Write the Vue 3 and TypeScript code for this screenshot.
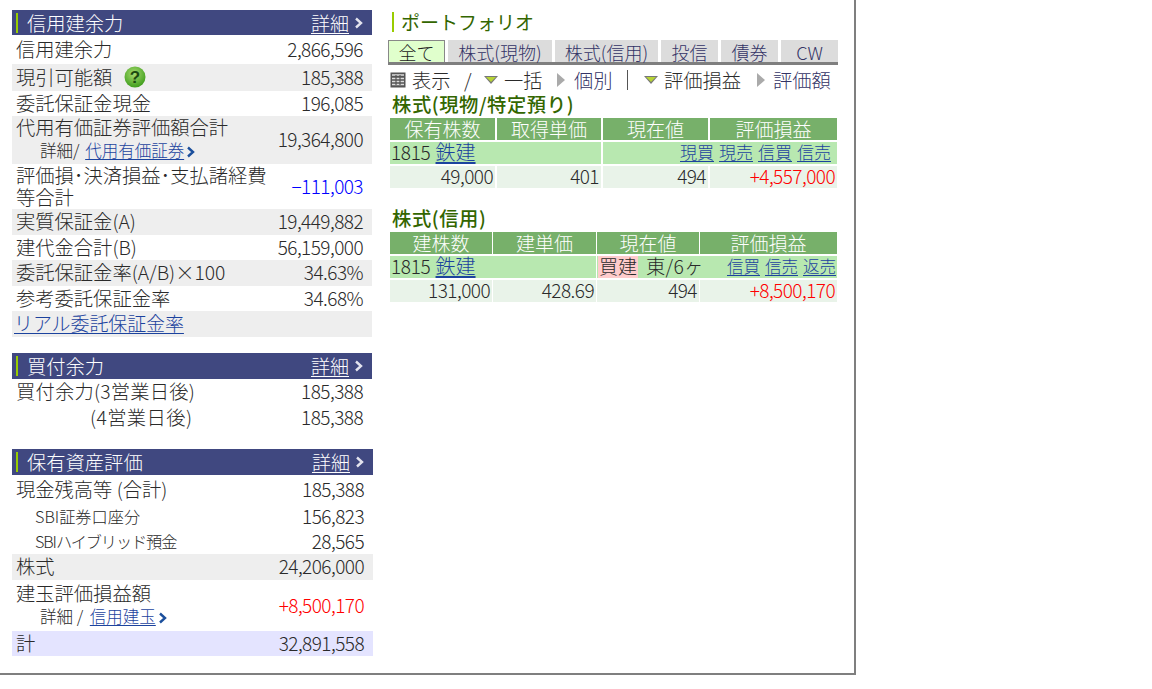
<script setup lang="ts">
interface Row {
  label: string
  value?: string
  h: number
  gray?: boolean
  cls?: string
}
const sec1a: Row[] = [
  { label: '信用建余力', value: '2,866,596', h: 29 },
  { label: '現引可能額', value: '185,388', h: 27, gray: true, cls: 'help' },
  { label: '委託保証金現金', value: '196,085', h: 25 },
]
const sec1b: Row[] = [
  { label: '実質保証金(A)', value: '19,449,882', h: 26, gray: true },
  { label: '建代金合計(B)', value: '56,159,000', h: 25 },
  { label: '委託保証金率(A/B)×100', value: '34.63%', h: 26, gray: true },
  { label: '参考委託保証金率', value: '34.68%', h: 25 },
]
const sec2: Row[] = [
  { label: '買付余力(3営業日後)', value: '185,388', h: 26, cls: 'loose' },
  { label: '(4営業日後)', value: '185,388', h: 26, cls: 'indent' },
]
const sec3a: Row[] = [
  { label: '現金残高等 (合計)', value: '185,388', h: 29 },
  { label: 'SBI証券口座分', value: '156,823', h: 25, cls: 'sub' },
  { label: 'SBIハイブリッド預金', value: '28,565', h: 25, cls: 'sub tight' },
  { label: '株式', value: '24,206,000', h: 26, gray: true },
]
const tabs = [
  { t: '全て', w: 57, on: true },
  { t: '株式(現物)', w: 104 },
  { t: '株式(信用)', w: 103 },
  { t: '投信', w: 57 },
  { t: '債券', w: 57 },
  { t: 'CW', w: 57 },
]
</script>

<template>
  <div class="frame">
    <div class="left">
      <section class="sec">
        <header class="bar">
          <span class="tick"></span><span class="bar-title">信用建余力</span>
          <a class="more">詳細</a>
          <svg class="chev" width="10" height="12" viewBox="0 0 10 12"><path d="M2 1.5 L7 6 L2 10.5" fill="none" stroke="#e4e4ee" stroke-width="2.4" /></svg>
        </header>
        <div v-for="r in sec1a" :key="r.label" class="row" :class="{ gray: r.gray }" :style="{ height: r.h + 'px' }">
          <span class="lab">{{ r.label }}<svg v-if="r.cls === 'help'" class="q" width="22" height="22" viewBox="0 0 22 22"><defs><radialGradient id="qg" cx="45%" cy="35%" r="65%"><stop offset="0" stop-color="#a8dc70" /><stop offset="1" stop-color="#3f9d1c" /></radialGradient></defs><circle cx="11" cy="11" r="10.5" fill="url(#qg)" /><text x="11" y="17" text-anchor="middle" class="qt">?</text></svg></span>
          <span class="val">{{ r.value }}</span>
        </div>
        <div class="row gray tall48">
          <div class="lab stack">
            <div>代用有価証券評価額合計</div>
            <div class="small pad40">詳細/ <a class="link gap2">代用有価証券</a><svg class="chev2" width="10" height="12" viewBox="0 0 10 12"><path d="M2 1.5 L7 6 L2 10.5" fill="none" stroke="#1b4f9c" stroke-width="2.4" /></svg></div>
          </div>
          <span class="val">19,364,800</span>
        </div>
        <div class="row tall45">
          <div class="lab wrap">評価損･決済損益･支払諸経費等合計</div>
          <span class="val blue">−111,003</span>
        </div>
        <div v-for="r in sec1b" :key="r.label" class="row" :class="{ gray: r.gray }" :style="{ height: r.h + 'px' }">
          <span class="lab">{{ r.label }}</span>
          <span class="val">{{ r.value }}</span>
        </div>
        <div class="row gray h26"><a class="link real">リアル委託保証金率</a></div>
      </section>

      <section class="sec mid">
        <header class="bar">
          <span class="tick"></span><span class="bar-title">買付余力</span>
          <a class="more">詳細</a>
          <svg class="chev" width="10" height="12" viewBox="0 0 10 12"><path d="M2 1.5 L7 6 L2 10.5" fill="none" stroke="#e4e4ee" stroke-width="2.4" /></svg>
        </header>
        <div v-for="r in sec2" :key="r.label" class="row" :style="{ height: r.h + 'px' }">
          <span class="lab" :class="r.cls">{{ r.label }}</span>
          <span class="val">{{ r.value }}</span>
        </div>
      </section>

      <section class="sec wide">
        <header class="bar">
          <span class="tick"></span><span class="bar-title">保有資産評価</span>
          <a class="more">詳細</a>
          <svg class="chev" width="10" height="12" viewBox="0 0 10 12"><path d="M2 1.5 L7 6 L2 10.5" fill="none" stroke="#e4e4ee" stroke-width="2.4" /></svg>
        </header>
        <div v-for="r in sec3a" :key="r.label" class="row" :class="{ gray: r.gray }" :style="{ height: r.h + 'px' }">
          <span class="lab" :class="r.cls">{{ r.label }}</span>
          <span class="val">{{ r.value }}</span>
        </div>
        <div class="row tall51">
          <div class="lab stack">
            <div>建玉評価損益額</div>
            <div class="small pad40">詳細 / <a class="link gap3">信用建玉</a><svg class="chev2" width="10" height="12" viewBox="0 0 10 12"><path d="M2 1.5 L7 6 L2 10.5" fill="none" stroke="#1b4f9c" stroke-width="2.4" /></svg></div>
          </div>
          <span class="val red">+8,500,170</span>
        </div>
        <div class="row total h25"><span class="lab">計</span><span class="val">32,891,558</span></div>
      </section>
    </div>

    <div class="right">
      <h2 class="pf"><span class="pf-tick"></span>ポートフォリオ</h2>
      <nav class="tabs">
        <span v-for="t in tabs" :key="t.t" class="tab" :class="{ on: t.on }" :style="{ width: t.w + 'px' }">{{ t.t }}</span>
      </nav>
      <div class="tools">
        <svg class="grid-ic" width="16" height="16" viewBox="0 0 16 16"><rect x="0.5" y="0.5" width="15" height="15" fill="#555" /><path d="M2 3h12M2 6.5h12M2 9.5h12M2 12.5h12" stroke="#ddd" stroke-width="1.4" /><path d="M6 3v10M10 3v10" stroke="#555" stroke-width="1.2" /></svg>
        <span class="t-a w38">表示</span>
        <span class="t-a w33">/</span>
        <svg class="tri" width="16" height="10" viewBox="0 0 16 10"><path d="M1 1h14L8 9z" fill="#777" /><path d="M3 2h10L8 7z" fill="#b6d334" /></svg>
        <span class="t-a w52">一括</span>
        <svg class="tri-r" width="10" height="16" viewBox="0 0 10 16"><path d="M1 1 L9 8 L1 15z" fill="#aaa" /></svg>
        <span class="t-n w53">個別</span>
        <span class="sep"></span>
        <svg class="tri" width="16" height="10" viewBox="0 0 16 10"><path d="M1 1h14L8 9z" fill="#777" /><path d="M3 2h10L8 7z" fill="#b6d334" /></svg>
        <span class="t-a w92">評価損益</span>
        <svg class="tri-r" width="10" height="16" viewBox="0 0 10 16"><path d="M1 1 L9 8 L1 15z" fill="#aaa" /></svg>
        <span class="t-n w60">評価額</span>
      </div>
      <h3 class="sub-h first">株式(現物/特定預り)</h3>
      <div class="tbl t1">
        <div class="th">保有株数</div><div class="th">取得単価</div><div class="th">現在値</div><div class="th">評価損益</div>
        <div class="name s2"><span class="code">1815</span> <a class="link big">鉄建</a></div>
        <div class="name s2 acts"><a class="link">現買</a><a class="link">現売</a><a class="link">信買</a><a class="link">信売</a></div>
        <div class="td">49,000</div><div class="td">401</div><div class="td">494</div><div class="td red">+4,557,000</div>
      </div>
      <h3 class="sub-h second">株式(信用)</h3>
      <div class="tbl t2">
        <div class="th">建株数</div><div class="th">建単価</div><div class="th">現在値</div><div class="th">評価損益</div>
        <div class="name s2"><span class="code">1815</span> <a class="link big">鉄建</a></div>
        <div class="name s2 split">
          <span class="pos"><span class="buy">買建</span><span class="mkt">東/6ヶ</span></span>
          <span class="acts2"><a class="link">信買</a><a class="link">信売</a><a class="link">返売</a></span>
        </div>
        <div class="td">131,000</div><div class="td">428.69</div><div class="td">494</div><div class="td red">+8,500,170</div>
      </div>
    </div>
  </div>
</template>

<style>
html, body { background: #fff; }
</style>

<style scoped>
.frame {
  box-sizing: border-box;
  width: 856px;
  height: 675px;
  border-right: 2px solid #7f7f7f;
  border-bottom: 2px solid #7f7f7f;
  display: flex;
  padding: 10px 0 0 12px;
  font-family: "Noto Sans CJK JP", "Liberation Sans", sans-serif;
  font-weight: 300;
  font-size: 19.3px;
  line-height: 22px;
  color: #2a2a2a;
}
.left { width: 360px; display: flex; flex-direction: column; gap: 16px; flex: none; }
.sec { display: flex; flex-direction: column; }
.mid { margin-bottom: 2px; }
.wide { width: 361px; }
.bar {
  height: 25px;
  background: #404880;
  color: #fff;
  display: flex;
  align-items: center;
  padding: 0 8px 0 4px;
  flex: none;
}
.sec:nth-child(n+2) .bar { height: 26px; }
.tick { width: 2px; height: 20px; background: #99cc00; margin-right: 9px; }
.bar-title { flex: 1; }
.more { text-decoration: underline; text-underline-offset: 2px; font-size: 19px; margin-right: 5px; }
.chev { flex: none; }
.row {
  box-sizing: border-box;
  display: flex;
  justify-content: space-between;
  align-items: center;
  padding: 0 9px 2px 4px;
  flex: none;
}
.gray { background: #eeeeee; }
.total { background: #e4e4ff; }
.tall48 { height: 48px; }
.tall45 { height: 45px; }
.tall51 { height: 51px; }
.h26 { height: 26px; }
.h25 { height: 25px; }
.lab { white-space: nowrap; display: inline-flex; align-items: center; }
.q { margin-left: 12px; }
.qt { font: 700 17px "Liberation Sans", sans-serif; fill: #1c4a10; }
.val {
  font-size: 19px;
  letter-spacing: -0.55px;
  white-space: nowrap;
}
.red { color: #ff0000; }
.blue { color: #0000ff; }
.stack { display: block; }
.small { font-size: 16.5px; line-height: 24px; }
.pad40 { padding-left: 24px; }
.link { color: #1c439e; text-decoration: underline; text-underline-offset: 2px; }
.gap2 { margin-left: 2px; }
.gap3 { margin-left: 3px; }
.chev2 { margin-left: 2px; vertical-align: -1px; }
.wrap { white-space: normal; width: 262px; line-height: 22px; display: block; }
.real { margin-left: -2px; font-size: 19px; letter-spacing: -0.1px; }
.loose { letter-spacing: 0.2px; }
.indent { padding-left: 74px; letter-spacing: 0.4px; }
.sub { font-size: 16.2px; padding-left: 19px; }
.tight { letter-spacing: -1.1px; }

.right { width: 448px; margin-left: 18px; flex: none; }
.pf {
  margin: 2px 0 0;
  height: 20px;
  display: flex;
  align-items: center;
  font-size: 19px;
  font-weight: 400;
  color: #336600;
  padding-left: 2px;
}
.pf-tick { width: 2px; height: 20px; background: #99cc00; margin-right: 7px; }
.tabs {
  display: flex;
  gap: 3px;
  margin: 8px 0 0 -2px;
  height: 25px;
  box-sizing: border-box;
  border-bottom: 3px solid #7f7f7f;
  width: 450px;
}
.tab {
  box-sizing: border-box;
  height: 22px;
  flex: none;
  background: #dcdcdc;
  color: #333366;
  text-align: center;
  font-size: 18px;
  line-height: 24px;
}
.on { background: #e0ffcc; color: #222; border: 1px solid #888; border-bottom: none; line-height: 22px; }
.tools {
  display: flex;
  align-items: center;
  height: 27px;
  padding-top: 2px;
  box-sizing: border-box;
  white-space: nowrap;
}
.grid-ic { margin-right: 6px; flex: none; }
.t-a { color: #2a2a2a; }
.t-n { color: #333366; }
.w38 { width: 38px; }
.w33 { width: 33px; padding-left: 14px; box-sizing: border-box; }
.w52 { width: 38px; margin: 0 14px 0 5px; }
.w53 { width: 38px; margin: 0 15px 0 8px; }
.w92 { width: 77px; margin: 0 15px 0 5px; }
.w60 { width: 58px; margin-left: 7px; }
.tri, .tri-r { flex: none; }
.sep { width: 1px; height: 20px; background: #555; margin-right: 15px; }
.sub-h {
  margin: 0;
  font-size: 19.3px;
  letter-spacing: 0.6px;
  font-weight: 500;
  color: #336600;
  line-height: 22px;
  padding-left: 2px;
}
.first { margin-top: 1px; }
.second { margin-top: 19px; }
.tbl {
  display: grid;
  gap: 2px;
  margin-top: 3px;
  grid-auto-rows: 22px;
  width: 448px;
}
.t1 { grid-template-columns: 105px 104px 105px 127px; column-gap: 2px; }
.t2 { grid-template-columns: 102px 103px 102px 137px; column-gap: 1px; }
.th { background: #77b06a; color: #fff; text-align: center; font-size: 19px; line-height: 22px; }
.name { background: #b8e8b0; padding-left: 1px; white-space: nowrap; font-size: 19.3px; line-height: 20px; }
.code { letter-spacing: -0.35px; font-size: 19px; margin-right: 1px; }
.big { font-size: 20px; }
.s2 { grid-column: span 2; }
.acts { display: flex; justify-content: flex-end; gap: 5px; padding-right: 6px; font-size: 17px; }
.split { display: flex; justify-content: space-between; padding: 0 1px 0 1px; }
.pos { display: inline-flex; }
.buy { background: #ffcccc; padding: 0 1px; font-size: 19px; height: 22px; line-height: 20px; }
.mkt { margin-left: 8px; font-size: 19.3px; letter-spacing: 0.3px; }
.acts2 { display: flex; gap: 5px; font-size: 16.5px; }
.td {
  background: #e9f3e9;
  text-align: right;
  padding-right: 2px;
  font-size: 19px;
  letter-spacing: -0.55px;
  line-height: 20px;
}
</style>
